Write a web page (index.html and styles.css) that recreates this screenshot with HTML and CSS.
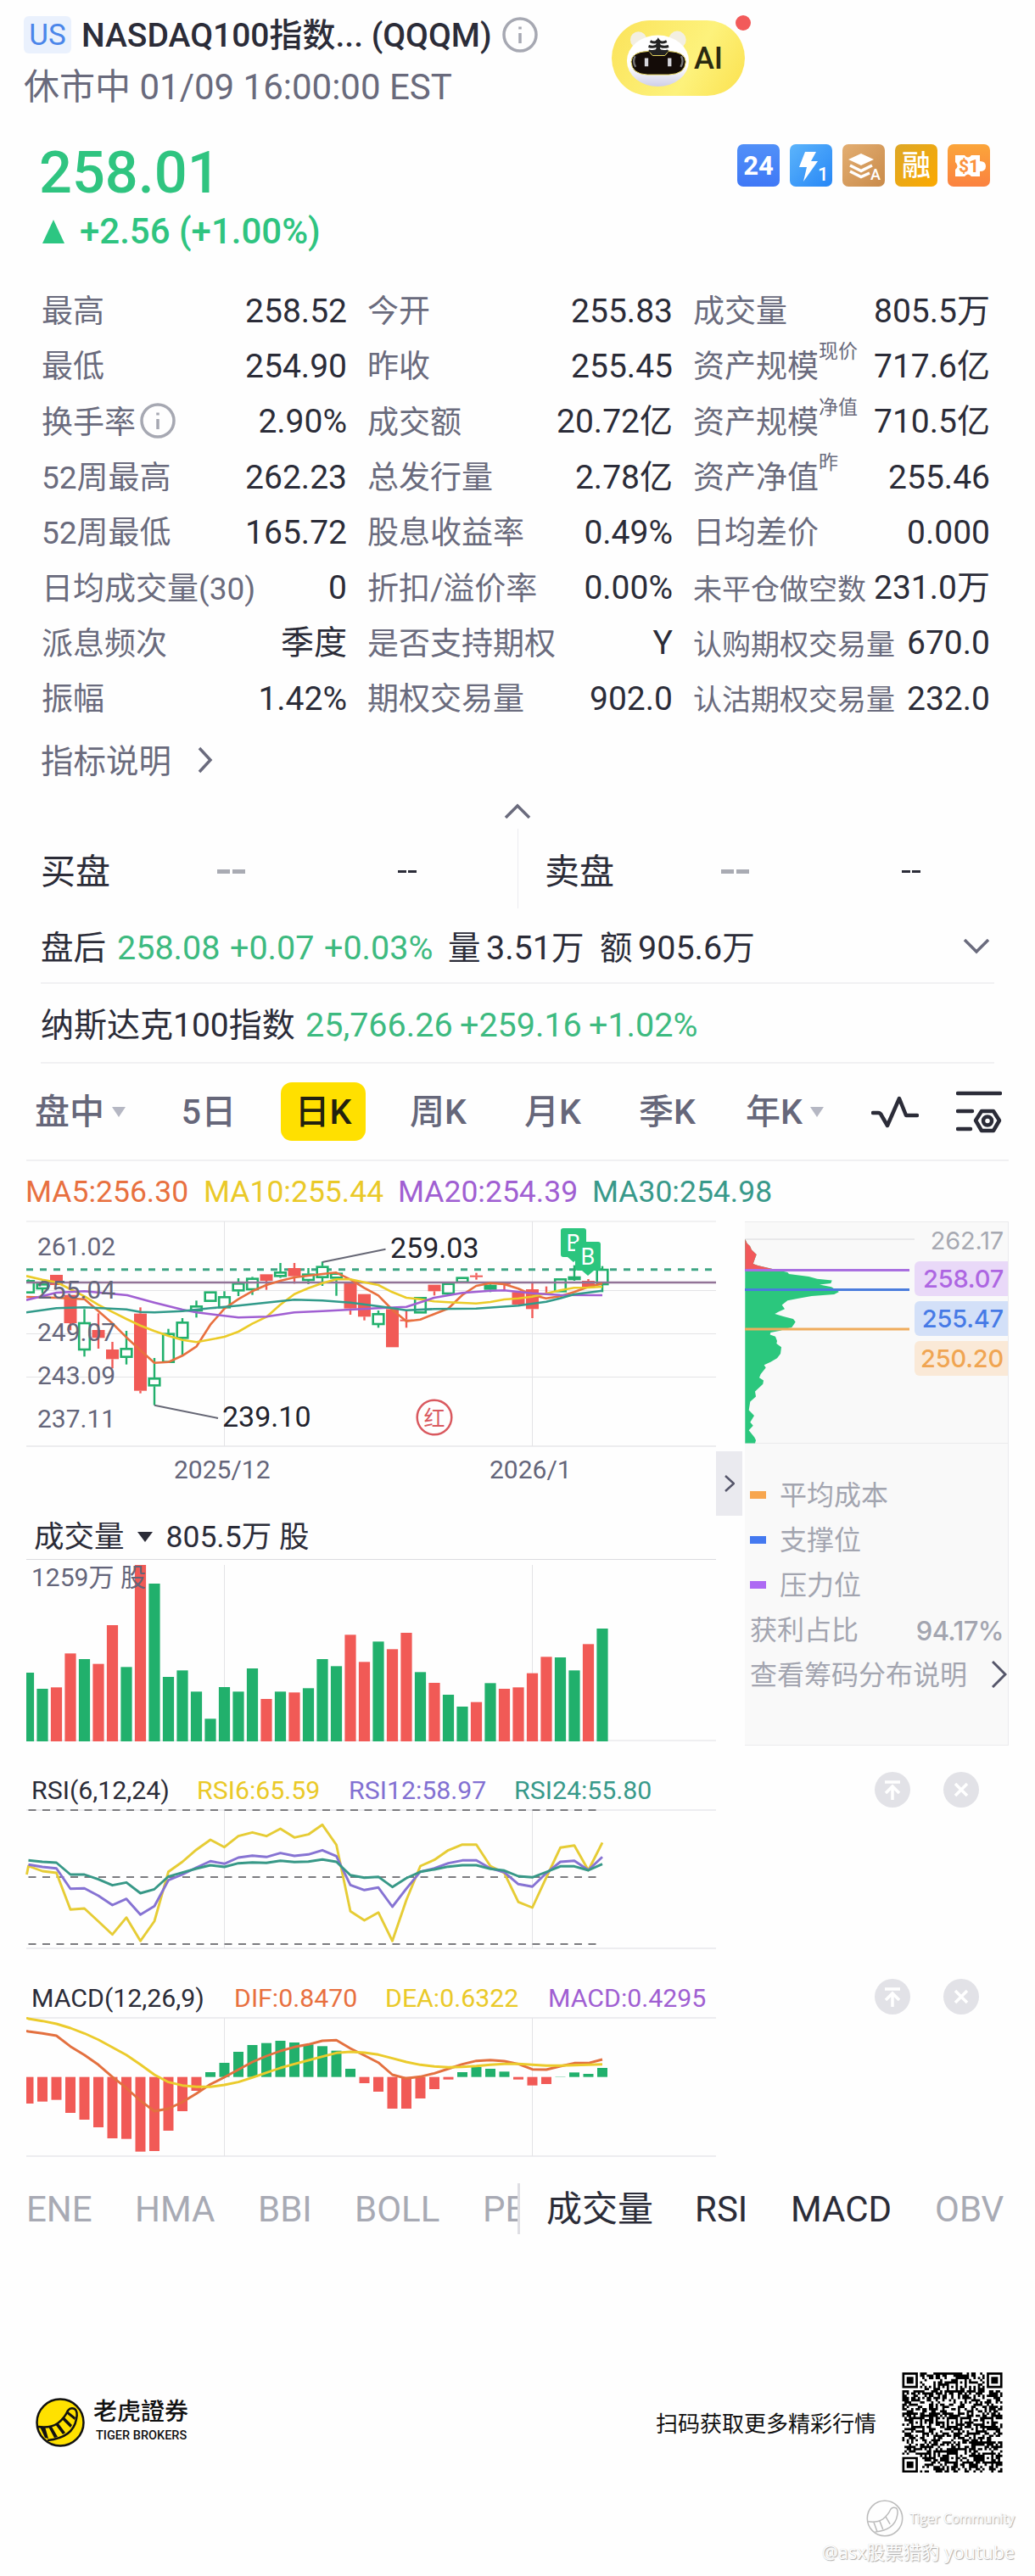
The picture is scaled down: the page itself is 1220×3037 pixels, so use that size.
FILE: index.html
```html
<!DOCTYPE html>
<html lang="zh-CN">
<head>
<meta charset="utf-8">
<title>NASDAQ100指数 (QQQM)</title>
<link rel="stylesheet" href="styles.css">
</head>
<body>
<header class="header">
  <div class="heading">
    <div class="title-row">
      <span class="market">US</span>
      <h1 class="title">NASDAQ100指数... (QQQM)</h1>
      <svg class="info" viewBox="0 0 42 42"><circle cx="21" cy="21" r="19"/><path d="M21 19v12M21 11.500v3"/></svg>
    </div>
    <div class="session">休市中 01/09 16:00:00 EST</div>
  </div>
  <div class="ai">
    <svg class="ai-face" viewBox="33 43 280 265">
      <defs>
        <linearGradient id="fur" x1="0" y1="0" x2="0" y2="1"><stop offset=".6" stop-color="#fff"/><stop offset="1" stop-color="#cfcfe8"/></linearGradient>
      </defs>
      <circle cx="128" cy="112" r="29" fill="#f3efe2"/><circle cx="266" cy="112" r="31" fill="#f3efe2"/>
      <ellipse cx="197" cy="187" rx="110" ry="91" fill="url(#fur)"/>
      <path d="M160 153H236Q294 155 296 190Q294 234 235 236H160Q104 234 102 190Q104 155 160 153Z" fill="#140c08" stroke="#e8d860" stroke-width="3"/>
      <path d="M163 150L178 168H222L237 150" fill="#222" stroke="#e8d860" stroke-width="3"/>
      <path d="M170 117Q190 127 198 113Q206 127 228 117M164 135Q188 142 198 128Q210 142 235 135M165 151Q188 157 198 144Q208 157 233 151" fill="none" stroke="#222" stroke-width="9"/>
      <path d="M198 112v50" stroke="#222" stroke-width="14"/>
      <path d="M116 170q-10 20 2 38M280 170q10 20-2 38" stroke="#777" stroke-width="7" fill="none"/>
      <path d="M150 177h13v29h-13zM232 177h13v29h-13z" fill="#d5d5da"/>
    </svg>
    <span class="ai-text">AI</span>
    <i class="dot"></i>
  </div>
</header>

<section class="quote">
  <div>
    <div class="price">258.01</div>
    <div class="change"><svg class="up" viewBox="0 0 26 28"><path d="M13 0L26 28H0Z"/></svg>+2.56 (+1.00%)</div>
  </div>
  <div class="badges">
    <span class="badge b24">24</span>
    <span class="badge bflash"><svg viewBox="0 0 50 50"><path d="M18 9H31L25 20H33L16 44L20 27H11Z"/><text x="33" y="43" font-size="22">1</text></svg></span>
    <span class="badge blayer"><svg viewBox="0 0 50 50"><path d="M22 11L37 18L22 25L7 18Z"/><path class="ln" d="M9 25L22 31.500L35 25M9 32L22 38.500L32 34"/><text x="33" y="42" font-size="18">A</text></svg></span>
    <span class="badge brong">融</span>
    <span class="badge bpuzzle"><svg viewBox="0 0 50 50"><path d="M9 13H20Q24 18 28 13H38V20Q45 20 45 26Q45 32 38 32V38H28Q24 33 20 38H9V30Q14 26 9 21Z"/><text class="cut" x="13" y="33" font-size="21">$1</text></svg></span>
  </div>
</section>

<section class="stats" id="stats"></section>

<div class="explain">指标说明<svg viewBox="0 0 20 32"><path d="M3 2L16 16L3 30"/></svg></div>
<div class="collapse"><svg viewBox="0 0 32 18"><path d="M2 17L16 3L30 17"/></svg></div>

<section class="book">
  <div class="side"><span class="side-name">买盘</span><b class="dash-l"></b><b class="dash-s"></b></div>
  <div class="side"><span class="side-name">卖盘</span><b class="dash-l"></b><b class="dash-s"></b></div>
</section>

<section class="line after">
  <span class="cn">盘后</span><span class="g" style="width:133px">258.08</span><span class="g" style="width:111px">+0.07</span><span class="g" style="width:146px">+0.03%</span><span class="cn n">量</span><span class="v" style="width:134px">3.51<span class="cn">万</span></span><span class="cn n">额</span><span class="v">905.6<span class="cn">万</span></span>
  <svg class="down" viewBox="0 0 32 18"><path d="M2 1L16 15L30 1"/></svg>
</section>
<section class="line index">
  <span class="cn">纳斯达克100指数</span><span class="g" style="width:182px">25,766.26</span><span class="g" style="width:152px">+259.16</span><span class="g">+1.02%</span>
</section>

<nav class="periods">
  <span class="p1">盘中<i></i></span><span>5日</span><span class="on">日K</span><span>周K</span><span>月K</span><span>季K</span><span class="p7">年K<i></i></span>
  <svg class="wave" viewBox="0 0 56 40"><path d="M2 21H8Q11 21 12 24L19 36L33 4L41 24H54"/></svg>
  <svg class="setup" viewBox="0 0 54 50"><path d="M2 3H52M2 24H19M2 45H17"/><path d="M30 24H44L51 35L44 47H30L23 35Z"/><circle cx="37" cy="35.500" r="5"/></svg>
</nav>

<div class="ma"><span class="c-or">MA5:256.30</span><span class="c-ye">MA10:255.44</span><span class="c-pu">MA20:254.39</span><span class="c-te">MA30:254.98</span></div>

<main class="charts">
  <div class="left">
    <svg id="kline" class="kline" viewBox="31 1439 813 329"></svg>
    <div class="vol-head"><span>成交量</span><i></i><span>805.5万 股</span></div>
    <svg id="volume" class="volume" viewBox="31 1833 813 225"></svg>
  </div>
  <div class="handle"><svg viewBox="0 0 12 20"><path d="M1 1L11 10L1 19"/></svg></div>
  <aside class="chips">
    <div class="chip-plot">
      <svg id="chips" viewBox="878 1440 200 261"></svg>
      <div class="levels"><span class="top">262.17</span><span class="lp">258.07</span><span class="lb">255.47</span><span class="lo">250.20</span></div>
    </div>
    <ul class="legend">
      <li><i class="k-o"></i>平均成本</li>
      <li><i class="k-b"></i>支撑位</li>
      <li><i class="k-p"></i>压力位</li>
      <li>获利占比<b>94.17%</b></li>
      <li>查看筹码分布说明<svg viewBox="0 0 18 32"><path d="M1 1L16 16L1 31"/></svg></li>
    </ul>
  </aside>
</main>

<section class="ind">
  <div class="ind-head rsi-head"><span class="nm">RSI(6,12,24)</span><span class="c-ye">RSI6:65.59</span><span class="c-vi">RSI12:58.97</span><span class="c-te">RSI24:55.80</span>
    <div class="tools"><svg viewBox="0 0 42 42"><circle cx="21" cy="21" r="21"/><path d="M12 12H30M21 33V18M13 25L21 17L29 25"/></svg><svg viewBox="0 0 42 42"><circle cx="21" cy="21" r="21"/><path d="M14 14L28 28M28 14L14 28"/></svg></div>
  </div>
  <svg id="rsi" class="rsi" viewBox="31 2132 813 200"></svg>
  <div class="ind-head macd-head"><span class="nm">MACD(12,26,9)</span><span class="c-or">DIF:0.8470</span><span class="c-ye">DEA:0.6322</span><span class="c-pu">MACD:0.4295</span>
    <div class="tools"><svg viewBox="0 0 42 42"><circle cx="21" cy="21" r="21"/><path d="M12 12H30M21 33V18M13 25L21 17L29 25"/></svg><svg viewBox="0 0 42 42"><circle cx="21" cy="21" r="21"/><path d="M14 14L28 28M28 14L14 28"/></svg></div>
  </div>
  <svg id="macd" class="macd" viewBox="31 2378 813 196"></svg>
</section>

<nav class="picks">
  <div class="main-picks"><span style="width:128px">ENE</span><span style="width:145px">HMA</span><span style="width:114px">BBI</span><span style="width:151px">BOLL</span><span>PE</span></div>
  <div class="sub-picks"><span style="width:175px">成交量</span><span style="width:113px">RSI</span><span style="width:170px">MACD</span><span class="off">OBV</span></div>
</nav>

<footer class="footer">
  <svg class="logo" viewBox="-30 -30 60 60"><circle r="27.500" fill="#ffe100" stroke="#111" stroke-width="2.500"/><path d="M-26 5Q-12 7-3 1Q5-5 9-14Q12-18 17-16Q21-13 19-4Q15 18-15 21" fill="none" stroke="#111" stroke-width="2.500"/><path d="M-24 5L-18 5L-14 19L-18 18ZM-14 5L-10 5L-3 17L-7 18ZM-6 2L-3 0L6 12L3 14ZM2-4L4-7L14 3L12 6ZM7-11L8-14L18-6L17-3Z" fill="#111"/></svg>
  <div class="brand"><strong>老虎證券</strong><small>TIGER BROKERS</small></div>
  <span class="scan">扫码获取更多精彩行情</span>
  <svg id="qr" class="qr" viewBox="0 0 45 45"></svg>
</footer>
<div class="mark">
  <div class="mark-top"><svg viewBox="-30 -30 60 60"><circle r="27"/><path d="M-26 5Q-12 7-3 1Q5-5 9-14Q12-18 17-16Q21-13 19-4Q15 18-15 21M-17 6L-12 20M-8 4L-3 17M1-3L8 9"/></svg>Tiger Community</div>
  <div class="mark-name">@asx股票猎豹 youtube</div>
</div>
<script src="app.js"></script>
</body>
</html>
```

FILE: styles.css
```css
* { box-sizing: border-box; }
body {
  margin: 0; width: 1220px; height: 3037px; background: #fefefe; color: #2b2c38; overflow: hidden;
  font-family: Roboto, "Noto Sans CJK SC", sans-serif; font-size: 39.500px;
}
svg { display: block; flex: none; }
i, b { font-style: normal; }
.c-or { color: #e8703f; } .c-ye { color: #eac928; } .c-pu { color: #a05fd2; } .c-te { color: #38998a; } .c-vi { color: #8270d2; }

.header { display: flex; height: 130px; padding: 18px 0 0 28px; }
.heading { width: 693px; flex: none; }
.title-row { display: flex; align-items: center; height: 46px; }
.market { width: 56px; height: 44px; line-height: 46px; border-radius: 6px; background: #eaf1fd; color: #4b86ea; font-size: 35px; text-align: center; }
.title { margin: 2px 0 0 12px; font-size: 39px; line-height: 46px; font-weight: 500; white-space: nowrap; width: 496px; }
.info { width: 42px; height: 42px; }
.info circle, .info path { fill: none; stroke: #a6a8b2; stroke-width: 3.500; }
.session { margin-top: 14px; font-size: 42px; line-height: 50px; color: #696a7c; white-space: nowrap; }
.ai { position: relative; display: flex; width: 157px; height: 89px; margin-top: 6px; border-radius: 45px; background: linear-gradient(120deg, #fbe35a, #fdf27c 60%, #fbe14e); }
.ai-face { width: 93px; height: 88px; }
.ai-text { margin-left: 4px; font-size: 36px; line-height: 91px; font-weight: 500; color: #2a2a10; }
.dot { position: absolute; right: -7px; top: -6px; width: 18px; height: 18px; border-radius: 50%; background: #f25a5a; }

.quote { display: flex; justify-content: space-between; height: 202px; padding: 39px 53px 0 46px; color: #2fc480; font-weight: 500; }
.price { font-size: 68.500px; line-height: 70px; }
.change { display: flex; align-items: center; margin-top: 9px; font-size: 42px; line-height: 50px; }
.up { width: 26px; height: 28px; margin: 0 18px 0 4px; fill: #2cc682; }
.badges { display: flex; gap: 12px; padding-top: 1px; }
.badge { width: 50px; height: 50px; border-radius: 7px; color: #fff; font-size: 31px; line-height: 51px; text-align: center; }
.badge svg { fill: #fff; }
.badge .ln { fill: none; stroke: #fff; stroke-width: 3.500px; }
.b24 { background: linear-gradient(#5190f8, #3f78f6); font-weight: 700; }
.bflash { background: linear-gradient(135deg, #5cb4fb, #2787f6); }
.blayer { background: linear-gradient(135deg, #e3ae72, #c98b4a); }
.brong { background: linear-gradient(135deg, #dda727, #fba900); font-size: 34px; line-height: 50px; }
.bpuzzle { background: linear-gradient(#fba53a, #fb8240); }
.badge .cut { fill: #fb923d; font-weight: 700; }

.stats { display: grid; grid-template-columns: 360px 360px 350px; column-gap: 24px; grid-auto-rows: 65.3px; padding: 2px 0 0 49px; height: 536px; }
.stat { display: flex; justify-content: space-between; align-items: center; white-space: nowrap; line-height: 50px; font-size: 39px; }
.stat .k { display: flex; padding-top: 3px; font-size: 37px; color: #6a6b7d; }
.stat .k.sm { font-size: 34px; }
.stat .k sup { font-size: 23px; line-height: 24px; margin-top: -5px; }
.stat .info { margin: 1px 0 0 5px; }

.explain { display: flex; align-items: center; height: 60px; padding-left: 48px; font-size: 38.500px; color: #6a6b7d; line-height: 60px; }
.explain svg { width: 20px; height: 32px; margin: -4px 0 0 30px; }
.explain path, .collapse path, .down path { fill: none; stroke: #6a6b7d; stroke-width: 3.500; }
.collapse { height: 49px; padding: 19px 0 0 594px; }
.collapse svg, .down { width: 32px; height: 18px; }

.book { display: flex; height: 94px; }
.side { display: flex; align-items: center; width: 610px; padding: 7px 0 0 48px; font-size: 41px; }
.side + .side { border-left: 1px solid #ececf0; padding-left: 31px; }
.side-name { width: 208px; line-height: 60px; }
.dash-l, .dash-s { background: linear-gradient(90deg, currentColor 44%, transparent 44% 56%, currentColor 56%); }
.dash-l { width: 33px; height: 5px; color: #a9abb3; }
.dash-s { width: 22px; height: 3px; margin-left: 180px; }

.line { display: flex; align-items: center; margin: 0 48px; border-bottom: 2px solid #f1f1f3; line-height: 50px; white-space: nowrap; }
.line span { flex: none; }
.line .cn { font-size: 38.500px; }
.line .g { color: #3dba80; }
.after { height: 89px; padding-top: 6px; }
.after > .cn:first-child { width: 90px; }
.after .n { width: 45px; }
.down { margin: -3px 5px 0 auto; }
.index { height: 94px; padding-top: 5px; }
.index > .cn:first-child { width: 312px; font-size: 39px; }

.periods { display: flex; align-items: center; height: 115px; margin: 0 31px; border-bottom: 2px solid #f0f0f2; font-size: 41px; font-weight: 500; color: #66677a; line-height: 60px; }
.periods span { width: 135px; text-align: center; flex: none; white-space: nowrap; }
.periods .p1 { display: flex; align-items: center; width: 148px; padding-left: 10px; }
.periods span.on { width: 100px; height: 69px; line-height: 70px; margin: 0 18px; border-radius: 13px; background: #ffe000; color: #22210f; }
.periods .p1 + span { width: 134px; }
.periods .p7 { display: flex; align-items: center; width: 145px; padding-left: 25px; }
.periods i { border: 8px solid transparent; border-top: 12px solid #b5b7c3; border-bottom: 0; margin-left: 9px; }
.wave { width: 56px; height: 40px; margin-left: 28px; }
.setup { width: 54px; height: 50px; margin-left: 44px; }
.wave path, .setup path, .setup circle { fill: none; stroke: #2b2c38; stroke-width: 4.500; stroke-linejoin: round; stroke-linecap: round; }

.ma { display: grid; grid-template-columns: 210px 229px 229px auto; height: 70px; padding-left: 30px; font-size: 35.500px; line-height: 72px; }

.charts { display: flex; height: 649px; padding-left: 31px; }
.left { width: 813px; flex: none; }
.kline { width: 813px; height: 329px; }
.vol-head { display: flex; align-items: center; height: 65px; padding: 24px 0 0 9px; font-size: 35.500px; line-height: 41px; }
.vol-head i { border: 9px solid transparent; border-top: 12px solid #2b2c38; border-bottom: 0; margin: 0 16px 2px 15px; }
.volume { width: 813px; height: 225px; }
svg text { font-family: Roboto, "Noto Sans CJK SC", sans-serif; }
.axis { font-size: 30px; fill: #64657a; }
.peak { font-size: 34px; fill: #22232d; }
.handle { display: flex; align-items: center; justify-content: center; width: 31px; height: 76px; margin: 272px 3px 0 0; background: #eaeaef; }
.handle svg { width: 12px; height: 20px; }
.handle path, .legend path { fill: none; stroke: #55566a; stroke-width: 2.500; }
.chips { width: 311px; height: 618px; margin-top: 1px; background: #f9f9f9; border: 1px solid #ebebed; border-left: 0; }
.chip-plot { display: flex; height: 261px; border-bottom: 1px solid #ebebed; }
.chip-plot svg { width: 200px; height: 261px; }
.levels { width: 110px; font: 500 29px/42px Inter, sans-serif; letter-spacing: -0.200px; text-align: right; padding-top: 1px; }
.levels span { display: block; height: 41px; margin-bottom: 6px; padding-right: 5px; border-radius: 6px 0 0 6px; }
.levels .top { color: #a7a9b2; margin-bottom: 4px; font-weight: 400; }
.lp { background: #e9d9f8; color: #ad66e2; } .lb { background: #d3e0f8; color: #467ae6; } .lo { background: #fae9d7; color: #f0a552; }
.legend { list-style: none; margin: 0; padding: 35px 1px 0 6px; font-size: 32px; color: #a3a5b0; }
.legend li { display: flex; align-items: center; height: 53px; line-height: 53px; white-space: nowrap; }
.legend i { width: 19px; height: 9px; margin-right: 16px; margin-top: -2px; }
.k-o { background: #f7a64f; } .k-b { background: #4479f0; } .k-p { background: #ad69f3; }
.legend b { margin-left: auto; padding-right: 4px; font: 500 31px/50px Inter, sans-serif; letter-spacing: -0.600px; }
.legend svg { width: 18px; height: 32px; margin-left: auto; margin-top: -3px; }
.legend path { stroke-width: 3; }

.ind { padding: 0 0 0 31px; }
.ind-head { position: relative; display: grid; height: 44px; line-height: 45px; font-size: 30.300px; padding-left: 6px; white-space: nowrap; }
.rsi-head { grid-template-columns: 195px 179px 195px auto; }
.macd-head { grid-template-columns: 239px 178px 192px auto; height: 46px; line-height: 47px; }
.nm { color: #2b2c38; }
.tools { position: absolute; left: 1000px; top: 1px; display: flex; gap: 39px; }
.tools svg { width: 42px; height: 42px; }
.tools circle { fill: #e2e2e7; }
.tools path { fill: none; stroke: #fff; stroke-width: 3.500; }
.rsi { width: 813px; height: 200px; overflow: visible; }
.macd { width: 813px; height: 196px; }

.picks { display: flex; height: 60px; line-height: 61px; font-size: 42px; }
.picks span { flex: none; }
.main-picks { display: flex; width: 613px; padding-left: 31px; overflow: hidden; border-right: 3px solid #dedee3; color: #a8aab4; white-space: nowrap; }
.sub-picks { display: flex; padding-left: 31px; white-space: nowrap; }
.off { color: #a8aab4; }

.footer { display: flex; align-items: center; height: 118px; margin: 163px 38px 0 41px; color: #111; }
.logo { width: 60px; height: 60px; }
.brand { width: 120px; margin: 0 0 3px 9px; }
.brand strong { display: block; font-size: 28px; line-height: 30px; font-weight: 500; }
.brand small { display: block; font-size: 14.500px; line-height: 18px; margin: 4px 0 0 3px; font-weight: 500; white-space: nowrap; }
.scan { margin: -1px 30px 0 auto; font-size: 26px; }
.qr { width: 119px; height: 118px; }
.mark { padding: 32px 24px 0 0; color: #fff; text-align: right; text-shadow: 1px 1px 1px #aaa, 0 0 1px #ccc; }
.mark-top { display: flex; justify-content: flex-end; align-items: center; height: 44px; font: 15.500px/44px "Open Sans", sans-serif; }
.mark-top svg { width: 46px; height: 46px; margin-right: 6px; }
.mark-top circle, .mark-top path { fill: none; stroke: #bcbcbc; stroke-width: 2; }
.mark-name { margin-top: 1px; font: 21.500px/34px "Open Sans", "Noto Sans CJK SC", sans-serif; }
```

FILE: app.js
```js
const GREEN = '#21b06c', RED = '#f15a56';
const X0 = 33.5, STEP = 16.5;
const px = i => X0 + STEP * i;
const $ = id => document.getElementById(id);

/* ---- key statistics ---- */
const info = '<svg class="info" viewBox="0 0 42 42"><circle cx="21" cy="21" r="19"/><path d="M21 19v12M21 11.500v3"/></svg>';
const stats = [
  ['最高', '258.52'], ['今开', '255.83'], ['成交量', '805.5万'],
  ['最低', '254.90'], ['昨收', '255.45'], ['资产规模<sup>现价</sup>', '717.6亿'],
  ['换手率' + info, '2.90%'], ['成交额', '20.72亿'], ['资产规模<sup>净值</sup>', '710.5亿'],
  ['52周最高', '262.23'], ['总发行量', '2.78亿'], ['资产净值<sup>昨</sup>', '255.46'],
  ['52周最低', '165.72'], ['股息收益率', '0.49%'], ['日均差价', '0.000'],
  ['日均成交量(30)', '0'], ['折扣/溢价率', '0.00%'], ['未平仓做空数', '231.0万', 'sm'],
  ['派息频次', '季度'], ['是否支持期权', 'Y'], ['认购期权交易量', '670.0', 'sm'],
  ['振幅', '1.42%'], ['期权交易量', '902.0'], ['认沽期权交易量', '232.0', 'sm']
];
$('stats').innerHTML = stats.map(([k, v, c]) =>
  `<div class="stat"><span class="k ${c || ''}">${k}</span><span>${v}</span></div>`).join('');

/* ---- drawing helpers ---- */
const line = (x1, y1, x2, y2, c, w = 1, extra = '') =>
  `<path d="M${x1} ${y1}L${x2} ${y2}" stroke="${c}" stroke-width="${w}" fill="none" ${extra}/>`;
const poly = (pts, c, w = 2.6) =>
  `<polyline points="${pts.map(p => p.join()).join(' ')}" fill="none" stroke="${c}" stroke-width="${w}" stroke-linejoin="round"/>`;
const rect = (x, y, w, h, c) => `<rect x="${x}" y="${y}" width="${w}" height="${h}" fill="${c}"/>`;
const text = (x, y, s, cls) => `<text x="${x}" y="${y}" class="${cls}">${s}</text>`;
const GRID = '#e3e3e6';

/* ---- candles: kind, body top, body bottom, high, low (thirds of a pixel below 1380) ---- */
const candles = [
  ['g',388,434,385,434],['g',400,420,390,434],['r',369,405,369,405],['r',440,540,440,565],['g',537,636,490,658],
  ['r',564,592,505,630],['r',633,667,606,700],['g',628,662,567,686],['r',506,779,484,788],['g',733,763,663,830],
  ['g',575,680,560,680],['g',535,595,522,655],['g',478,498,460,520],['g',428,464,428,464],['g',445,487,427,487],
  ['g',397,427,381,444],['g',380,423,376,440],['r',367,390,367,422],['g',358,376,327,380],['r',345,374,327,400],
  ['g',365,390,345,402],['g',338,380,322,408],['g',362,382,362,443],['r',395,488,395,510],['r',437,517,437,530],
  ['g',505,546,495,556],['r',490,625,490,625],['r',527,533,495,556],['g',448,505,448,505],['r',404,427,404,442],
  ['g',398,438,398,438],['g',377,398,377,398],['r',371,377,362,386],['f',404,422,395,430],['r',397,403,395,425],
  ['r',430,474,430,474],['r',420,490,395,522],['r',434,440,410,440],['g',382,430,382,430],['g',375,387,335,390],
  ['r',390,415,384,415],['g',348,405,338,430]
];
const ky = v => 1380 + v / 3;
const kx = v => 20 + v / 3;
let k = '';
k += line(31, 1440, 844, 1440, GRID) + line(31, 1705, 844, 1705, '#ececef', 2);
[1521.5, 1572.5, 1623.5].forEach(y => k += line(31, y, 844, y, GRID));
[264.5, 627.5].forEach(x => k += line(x, 1440, x, 1705, GRID));
k += line(31, 1496.7, 840, 1496.7, '#3fa584', 3, 'stroke-dasharray="8 8"');
candles.forEach(([t, a, b, h, l], i) => {
  const c = t === 'r' ? RED : GREEN, x = px(i);
  k += line(x, ky(h), x, ky(a), c, 2.4) + line(x, ky(b), x, ky(l), c, 2.4);
  k += t === 'g'
    ? `<rect x="${x - 6.3}" y="${ky(a) + 1}" width="12.6" height="${Math.max((b - a) / 3 - 2, 1)}" fill="#fefefe" stroke="${c}" stroke-width="2.600"/>`
    : rect(x - 7.5, ky(a), 15, (b - a) / 3, c);
});
k += line(31, 1512, 844, 1512, '#927397', 2.4);
const curves = [
  ['#e8703f', [33,447,140,450,239,455,288,497,337,540,387,590,436,635,486,680,536,677,585,655,635,622,684,545,734,488,783,455,832,427,882,405,931,390,981,378,1030,372,1080,366,1129,361,1179,385,1228,415,1278,442,1327,492,1377,533,1426,527,1475,508,1525,488,1575,440,1624,408,1674,398,1723,402,1773,418,1822,440,1871,452,1920,445,1970,430,2020,412,2070,400]],
  ['#ebcb28', [33,373,90,386,140,395,189,420,239,445,288,475,337,500,387,525,436,548,486,568,536,585,585,599,635,607,684,598,734,588,783,570,832,542,882,518,931,475,981,437,1030,416,1080,398,1129,385,1179,385,1228,395,1278,405,1327,430,1377,450,1426,455,1475,463,1525,466,1575,468,1624,470,1674,465,1723,456,1773,452,1822,446,1871,435,1920,424,1970,415,2020,414,2070,411]],
  ['#a05fd2', [33,458,140,432,239,427,390,441,486,467,585,492,635,502,684,508,783,520,882,517,981,502,1080,497,1179,492,1278,487,1377,482,1475,450,1575,433,1674,425,1723,424,1822,434,1920,440,2070,441]],
  ['#319a8a', [33,502,140,487,239,484,387,491,436,500,486,502,585,497,684,487,783,478,882,467,981,457,1080,460,1179,467,1278,480,1327,487,1377,494,1475,490,1624,488,1773,478,1871,464,1920,452,1970,438,2070,425]]
];
curves.forEach(([c, a]) => {
  const p = [];
  for (let i = 0; i < a.length; i += 2) p.push([kx(a[i]).toFixed(1), ky(a[i + 1]).toFixed(1)]);
  k += poly(p, c);
});
k += line(380, 1488, 454.5, 1472.7, '#666775', 2) + line(182, 1656.7, 257, 1672, '#666775', 2);
k += text(460, 1482.7, '259.03', 'peak') + text(262, 1682.3, '239.10', 'peak');
[['261.02', 1480], ['255.04', 1530.7], ['249.07', 1580.7], ['243.09', 1631.7], ['237.11', 1682.7]]
  .forEach(([s, y]) => k += text(44, y, s, 'axis'));
k += text(205, 1742.7, '2025/12', 'axis') + text(577, 1742.7, '2026/1', 'axis');
const flag = (x, y) => `<path d="M${x + 3} ${y}h24q3 0 3 3v28q0 3-3 3h-5l-7 6l-7-6h-5q-3 0-3-3v-28q0-3 3-3z" fill="#2bc57e"/>` +
  `<text x="${x + 15}" y="${y + 27}" font-size="27" fill="#fff" text-anchor="middle">B</text>`;
k += flag(661, 1448) + flag(678, 1464);
k += '<circle cx="512" cy="1671" r="20.300" fill="none" stroke="#d9595f" stroke-width="2.500"/>' +
  '<text x="512" y="1680.500" font-size="25" fill="#d9595f" text-anchor="middle">红</text>';
$('kline').innerHTML = k;

/* ---- volume ---- */
const kinds = 'ggrrgrrgrggggggggrgrgggrrgrrgrggrgrrrrggrg';
const tops = [576,633,628,508,528,545,408,556,195,261,591,568,643,739,627,643,561,669,643,646,631,528,553,442,538,466,493,435,574,612,654,696,680,613,633,628,578,520,522,568,475,420];
let v = line(31, 1838.5, 844, 1838.5, '#dcdce0') + line(31, 2052, 844, 2052, '#efeff1', 2);
[264.5, 627.5].forEach(x => v += line(x, 1845, x, 2052, GRID));
tops.forEach((t, i) => v += rect(px(i) - 6.6, 1780 + t / 3, 13.2, 273 - t / 3, kinds[i] === 'g' ? GREEN : RED));
v += text(37, 1870, '1259万 股', 'axis');
$('volume').innerHTML = v;

/* ---- chip distribution ---- */
const shape = [115,138,122,150,132,157,138,167,155,180,150,190,143,205,160,210,205,218,265,228,270,233,340,240,370,246,422,250,418,258,378,262,420,268,447,281,430,288,350,293,300,300,265,305,245,317,255,328,235,335,220,341,250,348,285,355,293,363,280,378,255,382,240,387,205,392,203,398,222,403,228,415,226,422,243,432,240,450,228,462,205,472,182,480,188,488,170,505,165,515,180,522,178,532,150,552,153,566,133,580,128,603,147,618,133,636,143,645,128,658,148,677,153,685,150,693,115,693];
let d = '';
for (let i = 0; i < shape.length; i += 2) d += `${i ? 'L' : 'M'}${(840 + shape[i] / 3).toFixed(1)} ${(1400 + shape[i + 1] / 2.306).toFixed(1)}`;
$('chips').innerHTML = line(878, 1460, 1083, 1460, '#e8e8ea', 2) +
  '<clipPath id="above"><rect x="878" y="1440" width="200" height="56"/></clipPath>' +
  `<path d="${d}Z" fill="#2bc77d"/><path d="${d}Z" fill="#f2585a" clip-path="url(#above)"/>` +
  line(878, 1496.5, 1072, 1496.5, '#a96fe0', 3) + line(878, 1519.5, 1072, 1519.5, '#4a7cdd', 3) + line(878, 1566, 1072, 1566, '#f0ac5c', 3);

/* ---- RSI ---- */
const rsi = [
  ['#e6cc35', [360,378,384,514,510,556,602,542,625,555,380,345,302,267,293,254,241,254,228,259,248,214,285,520,552,524,625,480,360,338,304,284,284,360,385,487,507,400,295,287,375,277]],
  ['#8673d3', [355,363,368,440,439,465,498,476,532,502,410,390,365,343,352,330,323,328,314,324,319,304,325,427,445,436,504,440,380,368,350,340,340,368,382,424,433,385,345,341,374,328]],
  ['#379887', [340,345,348,390,390,407,428,418,456,442,397,383,369,357,363,350,347,349,341,346,344,337,345,392,401,398,434,403,380,372,362,357,357,370,376,396,400,381,361,361,375,353]]
];
let r = line(31, 2134, 844, 2134, '#ededf0', 2) + line(31, 2297, 844, 2297, '#ededf0', 2);
[264.5, 627.5].forEach(x => r += line(x, 2134, x, 2297, GRID));
[2134, 2213, 2292].forEach(y => r += line(33.5, y, 703, y, '#7c7c80', 2, 'stroke-dasharray="9 7.500"'));
rsi.forEach(([c, a], n) => {
  const p = a.map((y, i) => [px(i), (2080 + y / 3).toFixed(1)]);
  if (n === 0) p.unshift([31.5, 2210]);
  r += poly(p, c, 2.9);
});
$('rsi').innerHTML = r;

/* ---- MACD ---- */
const hist = [480,473,467,513,537,564,603,605,650,648,576,507,435,369,336,297,273,266,258,264,271,277,293,357,408,438,498,498,462,429,395,369,351,357,367,395,416,411,385,370,375,354];
const dif = [225,232,240,278,308,343,386,425,470,507,498,475,445,412,387,360,333,312,294,280,271,258,256,285,310,335,378,391,385,373,357,341,329,326,330,340,359,360,348,337,337,324];
const dea = [180,188,198,213,232,254,281,308,342,378,404,416,421,421,414,404,388,371,354,340,327,314,301,297,300,307,320,333,343,349,352,350,347,343,340,340,343,346,346,344,343,341];
let m = line(31, 2379, 844, 2379, '#ededf0', 2) + line(31, 2542, 844, 2542, '#ededf0', 2);
[264.5, 627.5].forEach(x => m += line(x, 2379, x, 2542, GRID));
hist.forEach((h, i) => {
  const up = h < 386, y = 2320 + h / 3, z = 2320 + 386 / 3;
  m += rect(px(i) - 6, up ? y : z, 12, Math.abs(y - z), up ? GREEN : RED);
});
m += poly([[31, 2394.5]].concat(dif.map((y, i) => [px(i), (2320 + y / 3).toFixed(1)])), '#e3703f', 2.9);
m += poly([[31, 2379]].concat(dea.map((y, i) => [px(i), (2320 + y / 3).toFixed(1)])), '#ebcb2c', 2.9);
$('macd').innerHTML = m;

/* ---- QR code, 45 modules ---- */
const N = 45, inBox = (x, y, a, b, s) => x >= a && y >= b && x < a + s && y < b + s;
const ring = (x, y, cx, cy) => Math.max(Math.abs(x - cx), Math.abs(y - cy));
let seed = 20260109, q = '';
for (let y = 0; y < N; y++) for (let x = 0; x < N; x++) {
  seed = (seed * 1103515245 + 12345) % 2147483648;
  let on = (seed >> 13) % 100 < 51;
  if (x === 6 || y === 6) on = (x + y) % 2 === 0;
  for (const cx of [6, 22, 38]) for (const cy of [6, 22, 38]) {
    const n = ring(x, y, cx, cy);
    if (n <= 2 && !(cx + cy === 12 || cx + cy === 44 && cx !== 22)) on = n !== 1;
  }
  if (inBox(x, y, 0, 0, 8) || inBox(x, y, 37, 0, 8) || inBox(x, y, 0, 37, 8)) {
    const n = Math.min(ring(x, y, 3, 3), ring(x, y, 41, 3), ring(x, y, 3, 41));
    on = n === 3 || n < 2;
  }
  if (on) q += `M${x} ${y}h1.030v1.030h-1.030z`;
}
$('qr').innerHTML = `<path d="${q}" fill="#000"/>`;
```
